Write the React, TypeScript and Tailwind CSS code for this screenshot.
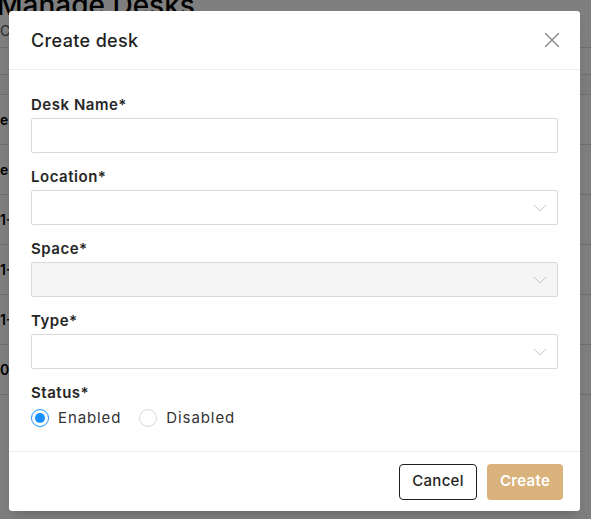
import { X, ChevronDown } from "lucide-react";

const font = { fontFamily: "Inter, 'Open Sans', sans-serif" };

function Field({
  label,
  disabled,
  select,
}: {
  label: string;
  disabled?: boolean;
  select?: boolean;
}) {
  return (
    <div className="mb-[15px]">
      <label className="block text-[15px] font-semibold tracking-[0.035em] text-[#262626] leading-[18px] mb-[4px]">
        {label}
      </label>
      <div
        className={`h-[35px] w-full rounded-[2px] border border-[#d9d9d9] flex items-center justify-end pr-[5px] ${
          disabled ? "bg-[#f5f5f5]" : "bg-white"
        }`}
      >
        {select && (
          <ChevronDown className="w-[24px] h-[24px] text-[#bfbfbf]" strokeWidth={0.9} />
        )}
      </div>
    </div>
  );
}

export default function App() {
  return (
    <div className="relative w-[591px] h-[519px] overflow-hidden bg-white" style={font}>
      {/* page behind the modal */}
      <div className="-mt-[11px] -ml-[3px]">
        <h1 className="text-[28px] font-medium text-black leading-[32px]">Manage Desks</h1>
        <p className="text-[14px] text-[#555] leading-[20px] pl-[3px]">Create desks</p>
        <div className="mt-[6px] border-t border-[#ddd]">
          <div className="h-[27px] border-b border-[#ddd]" />
          <div className="h-[20px] bg-[#fafafa] border-b border-[#ddd]" />
          {["es", "es", "1-", "1-", "1-", "04"].map((t, i) => (
            <div
              key={i}
              className="h-[50px] flex items-center border-b border-[#ddd] text-[14px] font-semibold text-black pl-[3px]"
            >
              {t}
            </div>
          ))}
        </div>
      </div>

      {/* overlay */}
      <div className="absolute inset-0 bg-black/50" />

      {/* modal */}
      <div className="absolute left-[9px] top-[11px] w-[571px] bg-white rounded-[3px] shadow-lg">
        <div className="h-[59px] flex items-center justify-between pl-[22px] pr-[15px] border-b border-[#ececec]">
          <h2 className="text-[18px] font-medium tracking-[0.02em] text-[#1f1f1f]">Create desk</h2>
          <X className="w-[26px] h-[26px] text-[#8c8c8c]" strokeWidth={1.3} />
        </div>

        <div className="px-[22px] pt-[26px]">
          <Field label="Desk Name*" />
          <Field label="Location*" select />
          <Field label="Space*" select disabled />
          <Field label="Type*" select />

          <label className="block text-[15px] font-semibold tracking-[0.035em] text-[#262626] leading-[18px] mb-[7px]">
            Status*
          </label>
          <div className="flex items-center gap-[18px] text-[15px] tracking-[0.06em] text-[#333] h-[18px] mb-[24px]">
            <span className="flex items-center gap-[9px]">
              <span className="w-[18px] h-[18px] rounded-full border border-[#1890ff] flex items-center justify-center">
                <span className="w-[10px] h-[10px] rounded-full bg-[#1890ff]" />
              </span>
              Enabled
            </span>
            <span className="flex items-center gap-[9px]">
              <span className="w-[18px] h-[18px] rounded-full border border-[#d9d9d9]" />
              Disabled
            </span>
          </div>
        </div>

        <div className="border-t border-[#ececec] h-[60px] flex items-center justify-end gap-[10px] px-[17px]">
          <button className="h-[36px] w-[78px] rounded-[4px] border border-[#1f1f1f] text-[15px] font-medium tracking-[0.02em] text-[#1f1f1f] bg-white">
            Cancel
          </button>
          <button className="h-[36px] w-[76px] rounded-[4px] bg-[#d9b27c] text-[15px] font-semibold tracking-[0.02em] text-white">
            Create
          </button>
        </div>
      </div>
    </div>
  );
}
